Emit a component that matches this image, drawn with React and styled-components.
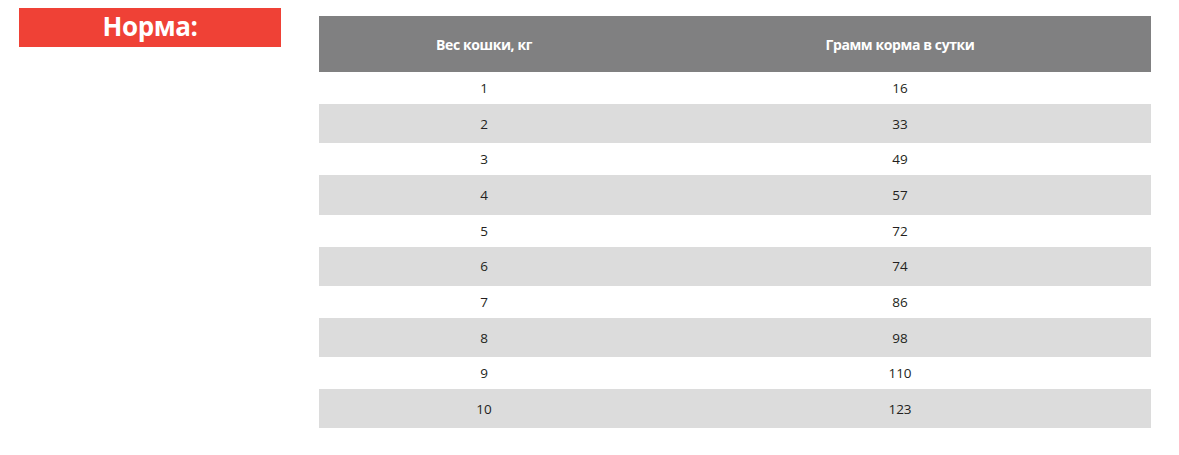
import React from "react";
import styled, { createGlobalStyle } from "styled-components";

const GlobalStyle = createGlobalStyle`
  body {
    margin: 0;
    background: #fff;
    font-family: "Open Sans", "Noto Sans", sans-serif;
  }
`;

const rows = [
  [1, 16],
  [2, 33],
  [3, 49],
  [4, 57],
  [5, 72],
  [6, 74],
  [7, 86],
  [8, 98],
  [9, 110],
  [10, 123],
];

const Page = styled.div`
  display: flex;
  align-items: flex-start;
  padding: 8px 0 0 19px;
`;

const Badge = styled.div`
  width: 262px;
  height: 39px;
  background: #ef4136;
  color: #fff;
  font-weight: 700;
  font-size: 26px;
  letter-spacing: -0.4px;
  display: flex;
  align-items: center;
  justify-content: center;
  padding-bottom: 4px;
  box-sizing: border-box;
`;

const Table = styled.div`
  margin: 8px 0 0 38px;
  width: 832px;
  display: grid;
  grid-template-columns: 330px 502px;
`;

const Head = styled.div`
  height: 56px;
  background: #808081;
  color: #fff;
  font-weight: 700;
  font-size: 14px;
  letter-spacing: -0.4px;
  display: flex;
  align-items: center;
  justify-content: center;
  box-sizing: border-box;
`;

const Cell = styled.div`
  height: ${(p) => (p.$shade ? 39.3 : 32)}px;
  background: ${(p) => (p.$shade ? "#dcdcdc" : "#fff")};
  color: #231f20;
  font-size: 13.5px;
  display: flex;
  align-items: center;
  justify-content: center;
`;

export default function App() {
  return (
    <>
      <GlobalStyle />
      <Page>
        <Badge>Норма:</Badge>
        <Table>
          <Head>Вес кошки, кг</Head>
          <Head>Грамм корма в сутки</Head>
          {rows.map(([w, g], i) => (
            <React.Fragment key={w}>
              <Cell $shade={i % 2 === 1}>{w}</Cell>
              <Cell $shade={i % 2 === 1}>{g}</Cell>
            </React.Fragment>
          ))}
        </Table>
      </Page>
    </>
  );
}
